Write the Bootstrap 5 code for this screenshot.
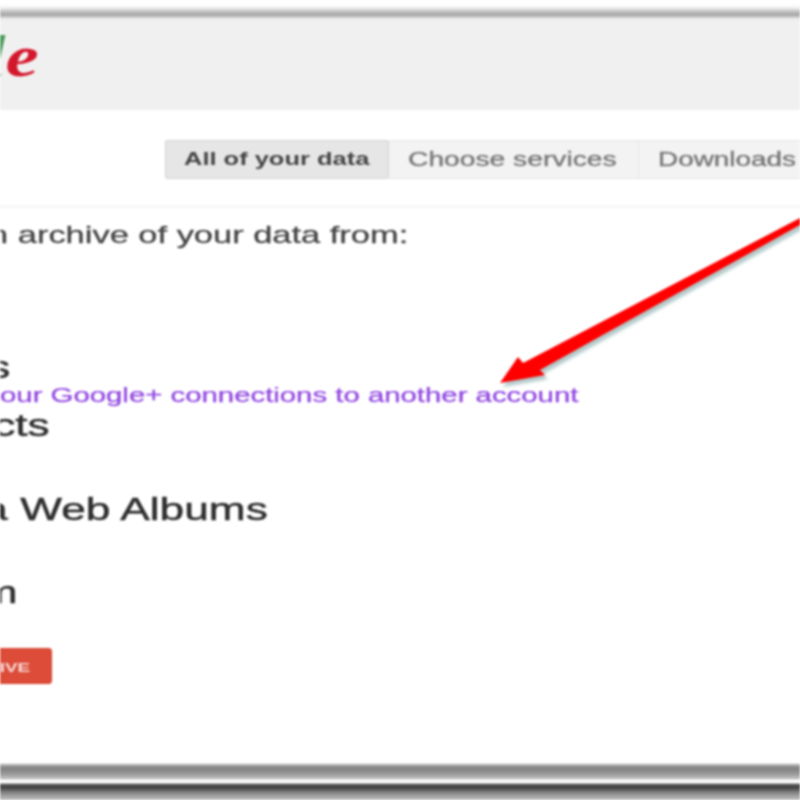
<!DOCTYPE html>
<html lang="en"><head><meta charset="utf-8">
<link href="https://cdn.jsdelivr.net/npm/bootstrap@5.3.0/dist/css/bootstrap.min.css" rel="stylesheet">
<style>
html,body{height:800px;overflow:hidden;background:#fff}
.shot{height:800px;width:800px;overflow:hidden;position:relative;font-family:"Liberation Sans",Arial,sans-serif;color:#333;filter:blur(.8px)}
.wide{display:inline-block;transform:scaleX(1.447);transform-origin:0 50%;white-space:nowrap}
.topline{height:20px;background:linear-gradient(#fff 0,#fff 5px,#eee 8px,#c8c8c8 11px,#aaa 14px,#b0b0b0 16px,#e4e4e4 18px,#f0f0f0 20px)}
.headbar{height:90px;background:#f0f0f0;padding-top:6px}
.logo{font-family:"Liberation Serif",serif;font-style:italic;font-weight:700;font-size:60px;line-height:60px;color:#d3182c;margin-left:-182px;white-space:nowrap;transform:scaleX(1.25);transform-origin:0 50%;display:block;text-shadow:0 0 3px #fff}
.logo b{font-weight:700;color:#1a6fd0}.logo i{color:#e8a800}.logo u{text-decoration:none;color:#4c9a5c}
.tabstrip{height:98px;padding-top:30px;padding-left:165px;border-bottom:3px solid #f6f6f6}
.tabbtn{height:39px;line-height:37px;font-size:19.3px;color:#777;background:#f3f3f3;border:1px solid #e6e6e6;flex:none;-webkit-text-stroke:.35px #777;overflow:hidden}
.tabbtn.on{width:224px;background:#e6e6e6;border-color:#d3d3d3;color:#444;border-radius:2px;padding-left:18px;font-size:17.6px;font-weight:700;-webkit-text-stroke:0}
.tabbtn.mid{width:250px;border-left:0;padding-left:19px;font-size:19.5px}
.tabbtn.end{width:200px;border-left:0;padding-left:19px}
.bodyarea{height:555px;padding-top:11px}
.introline{font-size:23.8px;line-height:32px;color:#444;margin-left:-143px;margin-bottom:97px;-webkit-text-stroke:.3px #444}
.rowitem{display:block;font-size:30.6px;line-height:38px;color:#2e2e2e;margin-left:-125px;-webkit-text-stroke:.45px #2e2e2e}
.xferlink{display:block;font-size:20.3px;line-height:18px;height:18px;color:#8f45e0;margin-left:-131px;text-decoration:none;margin-bottom:2px;-webkit-text-stroke:.25px #8f45e0}
.gapa{margin-top:46px}.gapb{margin-top:4px}.gapc{margin-top:3px}
.gobtn{margin-top:37px;margin-left:-146px;height:36px;line-height:36px;width:198px;background:#dd4b39;border:1px solid #d8432f;border-radius:3px;text-align:right;padding-right:21px}
.gobtn span{display:inline-block;white-space:nowrap;font-size:13px;font-weight:700;color:#f6dcd6;transform:scaleX(1.447);transform-origin:100% 50%}
.botband{height:37px;background:linear-gradient(#fff 0,#aaa 2px,#808080 5px,#999 11px,#c4c4c4 16px,#fff 17px,#fff 20px,#666 21px,#3c3c3c 24px,#888 30px,#c0c0c0 37px)}
.arrowlayer{position:absolute;left:490px;top:205px;overflow:visible}
.arrowshade{filter:blur(1.6px)}
</style></head><body>
<div class="shot">
<div class="topline"></div>
<div class="headbar"><div class="logo"><b>G</b>o<i>o</i><b>g</b><u>l</u>e</div></div>
<div class="tabstrip d-flex">
<div class="tabbtn on"><span class="wide">All of your data</span></div>
<div class="tabbtn mid"><span class="wide">Choose services</span></div>
<div class="tabbtn end"><span class="wide">Downloads</span></div>
</div>
<div class="bodyarea">
<div class="introline"><span class="wide">Create an archive of your data from:</span></div>
<div class="rowitem"><span class="wide">Circles</span></div>
<a class="xferlink" href="#"><span class="wide">Transfer your Google+ connections to another account</span></a>
<div class="rowitem"><span class="wide">Contacts</span></div>
<div class="rowitem gapa"><span class="wide">Picasa Web Albums</span></div>
<div class="rowitem gapb"><span class="wide">Profile</span></div>
<div class="rowitem gapc"><span class="wide">Stream</span></div>
<div class="gobtn"><span>CREATE ARCHIVE</span></div>
</div>
<div class="botband"></div>
<svg class="arrowlayer" width="310" height="190" viewBox="0 0 310 190">
<path class="arrowshade" d="M310 13 L33 158 L28 152 L10 178 L55 170 L50 165 L310 20 Z" fill="#7fa5a5" opacity=".6" transform="translate(3 4)"/>
<path d="M310 13 L33 158 L28 152 L10 178 L55 170 L50 165 L310 20 Z" fill="#f00"/>
</svg>
</div>
</body></html>
